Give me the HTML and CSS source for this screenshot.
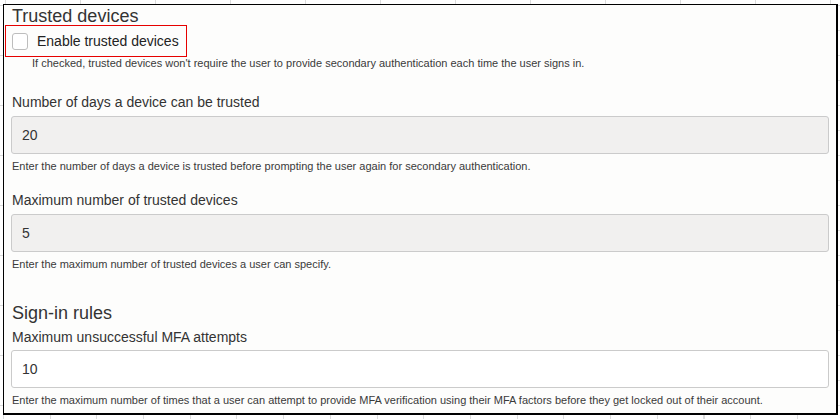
FILE: index.html
```html
<!DOCTYPE html>
<html lang="en">
<head>
  <meta charset="UTF-8" />
  <title>MFA settings</title>
  <link rel="stylesheet" href="styles.css">
</head>
<body>

  <div class="frame">

    <!-- Trusted devices -->
    <h2 class="group-title">Trusted devices</h2>
    <label class="check-row">
      <span class="checkbox"></span>
      Enable trusted devices
    </label>
    <p class="hint hint-indent">If checked, trusted devices won't require the user to provide secondary authentication each time the user signs in.</p>

    <div class="field first">
      <label class="field-label" for="days">Number of days a device can be trusted</label>
      <input class="field-input locked" id="days" type="text" value="20" readonly>
      <p class="hint">Enter the number of days a device is trusted before prompting the user again for secondary authentication.</p>
    </div>

    <div class="field">
      <label class="field-label" for="maxDevices">Maximum number of trusted devices</label>
      <input class="field-input locked" id="maxDevices" type="text" value="5" readonly>
      <p class="hint">Enter the maximum number of trusted devices a user can specify.</p>
    </div>

    <!-- Sign-in rules -->
    <h2 class="group-title spaced">Sign-in rules</h2>
    <div class="field after-title">
      <label class="field-label tight" for="attempts">Maximum unsuccessful MFA attempts</label>
      <input class="field-input" id="attempts" type="text" value="10">
      <p class="hint">Enter the maximum number of times that a user can attempt to provide MFA verification using their MFA factors before they get locked out of their account.</p>
    </div>

  </div>

</body>
</html>
```

FILE: styles.css
```css
html, body {
  margin: 0;
  padding: 0;
}

body {
  font-family: 'Liberation Sans', Arial, sans-serif;
  color: #333;
  padding: 4px 2px 4px 3px;
  height: 419px;
  box-sizing: border-box;
  background-color: #fff;
  background-image:
    repeating-linear-gradient(90deg, #dcdcdc 0 1px, transparent 1px 75px),
    repeating-linear-gradient(90deg, #dcdcdc 0 1px, transparent 1px 46.7px),
    repeating-linear-gradient(180deg, #dcdcdc 0 1px, transparent 1px 50px),
    repeating-linear-gradient(180deg, #dcdcdc 0 1px, transparent 1px 25px);
  background-size: 100% 4px, 100% 4px, 3px 100%, 2px 100%;
  background-position: 5px 0, 3px 415px, 0 5px, 838px 5px;
  background-repeat: repeat-x, repeat-x, repeat-y, repeat-y;
}

.frame {
  height: 100%;
  box-sizing: border-box;
  background: #fdfdfc;
  border: 1px solid #000;
  border-right-width: 2px;
  border-bottom-width: 2px;
  padding: 0 7px 0 7px;
}

.group-title {
  margin: 1px 0 0 1px;
  font-size: 18px;
  line-height: 20px;
  font-weight: normal;
  color: #333;
}

.group-title.spaced {
  margin-top: 30px;
  line-height: 22px;
}

.check-row {
  display: flex;
  align-items: center;
  gap: 9px;
  width: 182px;
  height: 32px;
  margin: -1px 0 0 -6px;
  padding-left: 6px;
  box-sizing: border-box;
  border: 1px solid #e60000;
  font-size: 14px;
  color: #222;
}

.checkbox {
  width: 14px;
  height: 15px;
  border: 1px solid #bdbdbd;
  border-radius: 3px;
  background: #fff;
}

.hint {
  margin: 5px 0 0 1px;
  font-size: 11px;
  line-height: 15px;
  color: #3a3a3a;
}

.hint-indent {
  margin: -1px 0 0 21px;
}

.field {
  margin-top: 16px;
}

.field.first {
  margin-top: 21px;
}

.field.after-title {
  margin-top: 0;
}

.field-label {
  display: block;
  margin-left: 1px;
  font-size: 14px;
  line-height: 20px;
  margin-bottom: 4px;
}

.field-label.tight {
  margin-top: 3px;
  margin-bottom: 3px;
}

.field-input {
  display: block;
  width: 100%;
  height: 38px;
  box-sizing: border-box;
  border: 1px solid #cbcbcb;
  border-radius: 3px;
  padding: 0 10px;
  font-family: 'Liberation Sans', Arial, sans-serif;
  font-size: 14px;
  color: #333;
  background: #fff;
  outline: none;
}

.field-input.locked {
  background: #f1f0ef;
}
```
